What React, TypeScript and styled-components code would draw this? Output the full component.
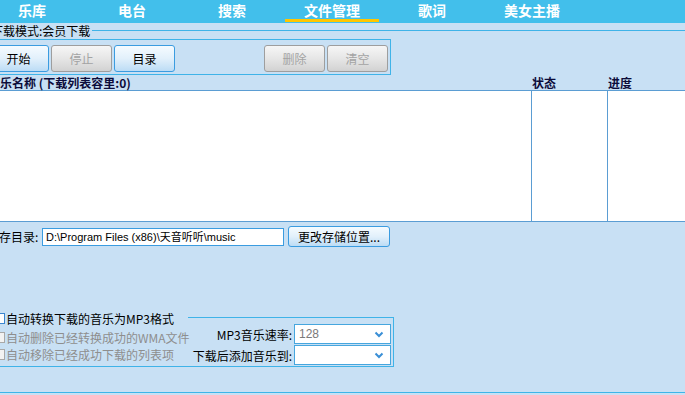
import * as React from "react";
import styled, { createGlobalStyle } from "styled-components";

const tabs = ["乐库", "电台", "搜索", "文件管理", "歌词", "美女主播"];
const activeTab = 3;

const Global = createGlobalStyle`
  html, body {
    margin: 0;
    padding: 0;
  }
  body {
    font-family: "Noto Sans CJK SC", "Liberation Sans", sans-serif;
    font-size: 12px;
    color: #000;
  }
`;

const Chevron = () => (
  <svg width="10" height="7" viewBox="0 0 10 7">
    <polyline points="1.5,1.5 5,5 8.5,1.5" fill="none" stroke="#3a8fd6" strokeWidth="2" />
  </svg>
);

const App = () => (
  <Page>
    <Global />
    <NavBar>
      {tabs.map((t, idx) => (
        <Tab key={t}>
          <TabLabel>{t}</TabLabel>
          <TabMark active={idx === activeTab} />
        </Tab>
      ))}
    </NavBar>

    <LegendRow>
      <LegendText>下载模式:会员下载</LegendText>
      <LegendLine />
    </LegendRow>
    <Toolbar>
      <ButtonGroup>
        <Button>开始</Button>
        <Button disabled>停止</Button>
        <Button>目录</Button>
      </ButtonGroup>
      <ButtonGroup>
        <Button disabled>删除</Button>
        <Button disabled>清空</Button>
      </ButtonGroup>
    </Toolbar>

    <ListHeader>
      <HeaderCell>音乐名称 (下载列表容里:0)</HeaderCell>
      <HeaderCell>状态</HeaderCell>
      <HeaderCell>进度</HeaderCell>
    </ListHeader>
    <ListBody>
      <ListColumn />
      <ListColumn divided />
      <ListColumn divided />
    </ListBody>

    <PathRow>
      <PathLabel>保存目录:</PathLabel>
      <PathInput>D:\Program Files (x86)\天音听听\music</PathInput>
      <Button wide>更改存储位置...</Button>
    </PathRow>

    <OptionsGroup>
      <OptionsLegend>
        <Checkbox />
        <OptionLabel>自动转换下载的音乐为MP3格式</OptionLabel>
        <OptionsLine />
      </OptionsLegend>
      <OptionsBody>
        <OptionList>
          <OptionRow>
            <Checkbox disabled />
            <OptionLabel disabled>自动删除已经转换成功的WMA文件</OptionLabel>
          </OptionRow>
          <OptionRow>
            <Checkbox disabled />
            <OptionLabel disabled>自动移除已经成功下载的列表项</OptionLabel>
          </OptionRow>
        </OptionList>
        <SelectGrid>
          <SelectLabel>MP3音乐速率:</SelectLabel>
          <Select>
            <SelectValue>128</SelectValue>
            <Chevron />
          </Select>
          <SelectLabel>下载后添加音乐到:</SelectLabel>
          <Select>
            <SelectValue />
            <Chevron />
          </Select>
        </SelectGrid>
      </OptionsBody>
    </OptionsGroup>

    <BottomRule />
  </Page>
);

const Page = styled.div`
  width: 685px;
  height: 395px;
  overflow: hidden;
  background: #c8e0f4;
  display: flex;
  flex-direction: column;
`;

const NavBar = styled.div`
  flex-shrink: 0;
  height: 23px;
  margin-left: -18px;
  background: #42bfeb;
  display: flex;
`;

const Tab = styled.div`
  width: 100px;
  display: flex;
  flex-direction: column;
  align-items: center;
`;

const TabLabel = styled.div`
  height: 19px;
  line-height: 20px;
  font-size: 14px;
  font-weight: bold;
  color: #fff;
`;

const TabMark = styled.div<{ active: boolean }>`
  width: 94px;
  height: 3px;
  background: ${props => (props.active ? "#ffc600" : "transparent")};
`;

const LegendRow = styled.div`
  flex-shrink: 0;
  height: 13px;
  margin-top: 1px;
  margin-left: -9px;
  display: flex;
  align-items: center;
`;

const LegendText = styled.span`
  font-size: 12px;
  line-height: 13px;
  white-space: nowrap;
`;

const LegendLine = styled.div`
  flex: 1;
  margin-left: 2px;
  border-top: 1px solid #3fb3e8;
`;

const Toolbar = styled.div`
  flex-shrink: 0;
  box-sizing: border-box;
  width: 407px;
  height: 36px;
  margin-top: 2px;
  margin-left: -16px;
  padding: 5px 2px 0 3px;
  border: 1px solid #3fb3e8;
  display: flex;
  justify-content: space-between;
  align-items: flex-start;
`;

const ButtonGroup = styled.div`
  display: flex;
  gap: 2px;
`;

const Button = styled.button<{ wide?: boolean }>`
  box-sizing: border-box;
  width: ${props => (props.wide ? "102px" : "61px")};
  height: ${props => (props.wide ? "21px" : "27px")};
  padding: 0;
  border: 1px solid #3b9ce0;
  border-radius: 3px;
  background: linear-gradient(#f5fbff, #e2f0fb 50%, #bcdcf5);
  font-family: "Noto Sans CJK SC", sans-serif;
  font-size: 12px;
  line-height: 1;
  color: #000;
  white-space: nowrap;

  &:disabled {
    border-color: #9e9e9e;
    background: linear-gradient(#f6f6f6, #e6e6e6 50%, #d2d2d2);
    color: #a3a3a3;
  }
`;

const ListHeader = styled.div`
  flex-shrink: 0;
  box-sizing: border-box;
  height: 15px;
  margin-top: 1px;
  margin-left: -13px;
  border-bottom: 1px solid #5b9dd3;
  display: grid;
  grid-template-columns: 544px 76px 1fr;
`;

const HeaderCell = styled.div`
  padding-left: 1px;
  font-size: 12px;
  font-weight: bold;
  line-height: 14px;
  color: #0c0c3a;
  white-space: nowrap;
`;

const ListBody = styled.div`
  flex-shrink: 0;
  box-sizing: border-box;
  height: 131px;
  margin-left: -13px;
  background: #fff;
  border-bottom: 1px solid #5b9dd3;
  display: grid;
  grid-template-columns: 544px 76px 1fr;
`;

const ListColumn = styled.div<{ divided?: boolean }>`
  border-left: ${props => (props.divided ? "1px solid #5b9dd3" : "none")};
`;

const PathRow = styled.div`
  flex-shrink: 0;
  height: 21px;
  margin-top: 4px;
  margin-left: -13px;
  display: flex;
  align-items: center;
`;

const PathLabel = styled.span`
  width: 55px;
  font-size: 12px;
  white-space: nowrap;
`;

const PathInput = styled.div`
  box-sizing: border-box;
  width: 242px;
  height: 18px;
  margin-right: 4px;
  padding-left: 3px;
  border: 1px solid #3b9ce0;
  background: #fff;
  font-family: "Liberation Sans", "Noto Sans CJK SC", sans-serif;
  font-size: 11px;
  line-height: 16px;
  white-space: nowrap;
  overflow: hidden;
`;

const OptionsGroup = styled.div`
  flex-shrink: 0;
  width: 414px;
  margin-top: 66px;
  margin-left: -20px;
`;

const OptionsLegend = styled.div`
  height: 11px;
  padding-left: 14px;
  display: flex;
  align-items: center;
`;

const OptionsLine = styled.div`
  flex: 1;
  align-self: flex-end;
  height: 6px;
  margin-left: 14px;
  border-top: 1px solid #3fb3e8;
  border-right: 1px solid #3fb3e8;
`;

const Checkbox = styled.span<{ disabled?: boolean }>`
  box-sizing: border-box;
  flex-shrink: 0;
  width: 11px;
  height: 11px;
  border: 1px solid ${props => (props.disabled ? "#a8a8a8" : "#3a86cf")};
  background: ${props => (props.disabled ? "#f2f2f2" : "#fff")};
`;

const OptionLabel = styled.span<{ disabled?: boolean }>`
  margin-left: 1px;
  font-size: 12px;
  line-height: 14px;
  white-space: nowrap;
  color: ${props => (props.disabled ? "#8e8e8e" : "#000")};
`;

const OptionsBody = styled.div`
  box-sizing: border-box;
  height: 43px;
  border-right: 1px solid #3fb3e8;
  border-bottom: 1px solid #3fb3e8;
  padding-right: 2px;
  display: flex;
  justify-content: space-between;
`;

const OptionList = styled.div`
  padding: 5px 0 0 14px;
  display: flex;
  flex-direction: column;
`;

const OptionRow = styled.div`
  height: 17px;
  display: flex;
  align-items: center;
`;

const SelectGrid = styled.div`
  display: grid;
  grid-template-columns: auto 97px;
  column-gap: 2px;
  row-gap: 1px;
  align-items: center;
  align-content: start;
`;

const SelectLabel = styled.span`
  font-size: 12px;
  text-align: right;
  white-space: nowrap;
`;

const Select = styled.div`
  box-sizing: border-box;
  height: 20px;
  border: 1px solid #46a6de;
  background: #fff;
  padding: 0 6px 0 4px;
  display: flex;
  align-items: center;
  justify-content: space-between;
`;

const SelectValue = styled.span`
  font-family: "Liberation Sans", sans-serif;
  font-size: 12px;
  color: #7a7a7a;
`;

const BottomRule = styled.div`
  flex-shrink: 0;
  height: 1px;
  margin-top: 25px;
  background: #3db5e8;
`;

export default App;
